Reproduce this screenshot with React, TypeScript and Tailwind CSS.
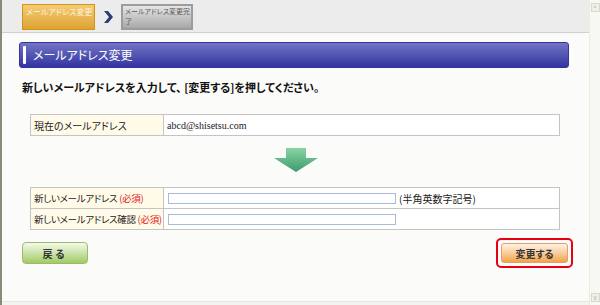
import React from 'react';

const jp = { fontFamily: '"Noto Sans CJK JP", "Noto Sans", sans-serif' };

export default function App() {
  return (
    <div className="w-[600px] h-[305px] flex bg-[#f4f4ee] overflow-hidden [font-feature-settings:'palt']" style={jp}>
      {/* left frame edge */}
      <div className="w-[2px] h-full bg-[#8c887c]" />

      <div className="flex-1 flex flex-col h-[302px]">
        {/* Steps */}
        <div className="h-[33px] bg-[#ececec] border-b border-[#cfcfcf] flex items-start pt-[4px] pl-[20px]">
          <div className="w-[73px] h-[26px] border border-[#d0961c] bg-gradient-to-b from-[#f4ca72] to-[#dea430] px-[3px] pt-[2px] text-[8px] leading-[9px] text-[#fff4d8] whitespace-nowrap">
            メールアドレス変更
          </div>
          <div className="w-[26px] h-[26px] flex items-center justify-center">
            <svg width="9" height="12" viewBox="0 0 9 12">
              <path d="M0 0 L4 0 L9 6 L4 12 L0 12 L5 6 Z" fill="#2c3c74" />
            </svg>
          </div>
          <div className="w-[72px] h-[26px] border-2 border-[#9c9c9c] bg-gradient-to-b from-[#e6e6e6] to-[#a8a8a8] px-[2px] text-[7px] leading-[10px] text-[#5a5a5a] whitespace-nowrap overflow-hidden">
            <div>メールアドレス変更完</div>
            <div>了</div>
          </div>
        </div>

        {/* Content */}
        <div className="flex-1 bg-[#fbfbfa] pt-[9px] pl-[17px] pr-[20px] border-b border-[#e8e8e0]">
          <div className="h-[26px] rounded-[3px] border border-[#3434a0] bg-gradient-to-b from-[#7474c4] to-[#3434a0] flex items-center pl-[3px]">
            <div className="w-[3px] h-[18px] bg-white rounded-[1px]" />
            <span className="ml-[7px] text-[12px] text-white">メールアドレス変更</span>
          </div>

          <p className="mt-[12px] ml-[3px] text-[11px] font-bold text-[#111] leading-[14px]">
            新しいメールアドレスを入力して、 [変更する]を押してください。
          </p>

          <table className="mt-[20px] ml-[11px] w-[530px] table-fixed border-collapse text-[10px] text-[#222]">
            <tbody>
              <tr className="h-[21px]">
                <td className="w-[133px] border border-[#c4c4c4] bg-[#fffbe8] pl-[3px] whitespace-nowrap">現在のメールアドレス</td>
                <td className="border border-[#c4c4c4] bg-white pl-[3px] text-[10px]" style={{ fontFamily: '"Liberation Serif", serif' }}>
                  abcd@shisetsu.com
                </td>
              </tr>
            </tbody>
          </table>

          <div className="flex justify-center mt-[12px] ml-[4px]">
            <svg width="44" height="24" viewBox="0 0 44 24">
              <defs>
                <linearGradient id="g" x1="0" y1="0" x2="0" y2="1">
                  <stop offset="0" stopColor="#88d4a4" />
                  <stop offset="1" stopColor="#3c9c6c" />
                </linearGradient>
              </defs>
              <path d="M12 0 H32 V10 H44 L22 24 L0 10 H12 Z" fill="url(#g)" />
            </svg>
          </div>

          <table className="mt-[15px] ml-[11px] w-[530px] table-fixed border-collapse text-[10px] text-[#222]">
            <tbody>
              <tr className="h-[21px]">
                <td className="w-[133px] border border-[#c4c4c4] bg-[#fffbe8] pl-[3px] whitespace-nowrap tracking-[-0.3px] text-[9.5px]">
                  新しいメールアドレス <span className="text-[#e02020]">(必須)</span>
                </td>
                <td className="border border-[#c4c4c4] bg-white pl-[4px]">
                  <div className="flex items-center">
                    <div className="w-[228px] h-[11px] border border-[#a8bcd8] bg-white" />
                    <span className="ml-[3px]">(半角英数字記号)</span>
                  </div>
                </td>
              </tr>
              <tr className="h-[21px]">
                <td className="w-[133px] border border-[#c4c4c4] bg-[#fffbe8] pl-[3px] whitespace-nowrap tracking-[-0.3px] text-[9.5px]">
                  新しいメールアドレス確認 <span className="text-[#e02020]">(必須)</span>
                </td>
                <td className="border border-[#c4c4c4] bg-white pl-[4px]">
                  <div className="w-[228px] h-[11px] border border-[#a8bcd8] bg-white" />
                </td>
              </tr>
            </tbody>
          </table>

          <div className="flex items-start justify-between mt-[8px] ml-[3px]">
            <button className="mt-[4px] w-[66px] h-[22px] rounded-[4px] border border-[#9cba6a] bg-gradient-to-b from-[#f4faea] to-[#a2ca62] text-[10px] font-bold text-[#333] tracking-[3px]">
              戻る
            </button>
            <div className="mr-[-4px] w-[77px] h-[30px] rounded-[5px] border-2 border-[#e60012] flex items-center justify-center">
              <button className="w-[67px] h-[20px] rounded-[3px] border border-[#e0a070] bg-gradient-to-b from-[#fff2e4] to-[#f2a444] text-[10px] font-bold text-[#333]">
                変更する
              </button>
            </div>
          </div>
        </div>
      </div>

      {/* scrollbar */}
      <div className="w-[11px] h-full bg-[#f8f8f2] border-l border-[#ecece4] flex flex-col justify-between py-[3px] items-center">
        <div className="w-[9px] h-[9px] border border-[#d8d8cc] bg-[#f0f0e8] flex items-center justify-center text-[6px] text-[#b0b0a0] leading-none">^</div>
        <div className="w-[9px] h-[9px] border border-[#d8d8cc] bg-[#f0f0e8] flex items-center justify-center text-[6px] text-[#b0b0a0] leading-none">v</div>
      </div>
    </div>
  );
}
